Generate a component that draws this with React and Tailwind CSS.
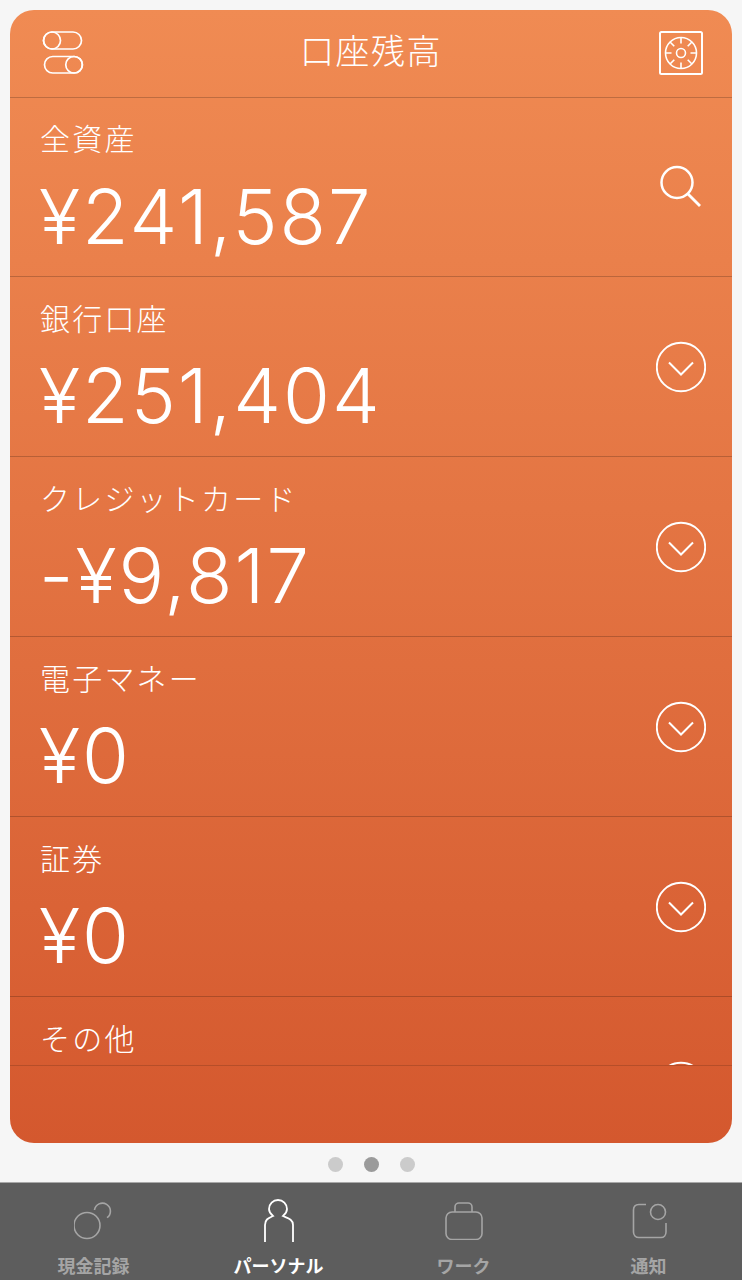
const cjk = "font-['Noto_Sans_CJK_JP',sans-serif]";
const num = "font-['Inter','Noto_Sans_CJK_JP',sans-serif] [font-feature-settings:'calt'_0]";

const rows = [
  { label: "全資産", value: "¥241,587", icon: "search" },
  { label: "銀行口座", value: "¥251,404", icon: "chev" },
  { label: "クレジットカード", value: "-¥9,817", icon: "chev" },
  { label: "電子マネー", value: "¥0", icon: "chev" },
  { label: "証券", value: "¥0", icon: "chev" },
  { label: "その他", value: "¥0", icon: "chev" },
];

function Toggles() {
  return (
    <svg width="42" height="44" viewBox="0 0 42 44" fill="none" stroke="white" strokeWidth="1.7">
      <rect x="1.5" y="1" width="38" height="17" rx="8.5" />
      <circle cx="10" cy="9.5" r="8.5" />
      <rect x="2.5" y="25.5" width="38" height="16.5" rx="8.25" />
      <circle cx="32" cy="33.75" r="8.25" />
    </svg>
  );
}

function Safe() {
  const ticks = [0, 45, 90, 135, 180, 225, 270, 315];
  return (
    <svg width="44" height="44" viewBox="0 0 44 44" fill="none" stroke="white" strokeWidth="1.6">
      <rect x="1" y="1" width="42" height="42" rx="1.5" strokeWidth="2" />
      <circle cx="22" cy="22" r="15.5" />
      <circle cx="22" cy="22" r="4.5" />
      {ticks.map((a) => (
        <line key={a} x1="22" y1="6.5" x2="22" y2="12.5" transform={`rotate(${a} 22 22)`} />
      ))}
    </svg>
  );
}

function Search() {
  return (
    <svg width="44" height="44" viewBox="0 0 44 44" fill="none" stroke="white" strokeWidth="2.5">
      <circle cx="19" cy="18.5" r="15.5" />
      <line x1="30" y1="30" x2="42" y2="42" strokeWidth="2.8" />
    </svg>
  );
}

function Chevron() {
  return (
    <svg width="50" height="52" viewBox="0 0 50 52" fill="none" stroke="white">
      <circle cx="25" cy="26" r="24.2" strokeWidth="1.9" />
      <path d="M13 21.5 L25 33.5 L37 21.5" strokeWidth="2" />
    </svg>
  );
}

function Row({ label, value, icon, first }) {
  return (
    <div className={`${first ? "h-[179px]" : "h-[180px]"} shrink-0 border-b border-black/20 pl-[30px] pr-[26px] flex justify-between text-white`}>
      <div>
        <div className={`${cjk} font-light text-[30px] leading-[40px] ${first ? "mt-[19px]" : "mt-[20px]"} whitespace-nowrap tracking-[2.2px]`}>{label}</div>
        <div className={`${num} font-light text-[76px] leading-[90px] ${first ? "mt-[14px]" : "mt-[13px]"} -ml-[1px] whitespace-nowrap tracking-[2px]`}>{value}</div>
      </div>
      <div className={icon === "search" ? "mt-[66px] mr-[4px]" : "mt-[64px]"}>
        {icon === "search" ? <Search /> : <Chevron />}
      </div>
    </div>
  );
}

function Tab({ label, active, children }) {
  return (
    <div className="flex-1 flex flex-col items-center">
      <div className="h-[52px] mt-[12px] flex items-center justify-center">{children}</div>
      <div className={`${cjk} font-bold text-[18px] leading-[24px] mt-[6px] whitespace-nowrap ${active ? "text-white" : "text-[#a5a5a5]"}`}>{label}</div>
    </div>
  );
}

export default function App() {
  return (
    <div className="w-[742px] h-[1280px] bg-[#f6f6f6] flex flex-col overflow-hidden">
      <div className="mx-[10px] mt-[10px] h-[1133px] shrink-0 rounded-[24px] overflow-hidden bg-gradient-to-b from-[#f08b53] to-[#d4582e] flex flex-col">
        <div className="h-[88px] shrink-0 border-b border-black/20 flex items-center justify-between pl-[32px] pr-[29px] relative">
          <div className="-mt-[1px]"><Toggles /></div>
          <div className={`${cjk} font-light text-[34px] text-white absolute left-0 right-0 text-center leading-[44px] top-[18px] tracking-[1.5px]`}>口座残高</div>
          <div className="-mt-[1px]"><Safe /></div>
        </div>
        <div className="h-[967px] shrink-0 overflow-hidden flex flex-col">
          {rows.map((r, i) => <Row key={r.label} first={i === 0} {...r} />)}
        </div>
        <div className="flex-1 border-t border-black/15" />
      </div>
      <div className="h-[39px] shrink-0 pt-[3px] flex items-center justify-center gap-[21px]">
        <div className="w-[15px] h-[15px] rounded-full bg-[#cbcbcb]" />
        <div className="w-[15px] h-[15px] rounded-full bg-[#9b9b9b]" />
        <div className="w-[15px] h-[15px] rounded-full bg-[#cbcbcb]" />
      </div>
      <div className="h-[98px] shrink-0 bg-[#5d5d5d] border-t border-[#a8a8a8] flex px-[1px]">
        <Tab label="現金記録">
          <svg width="40" height="40" viewBox="0 0 40 40" fill="none" stroke="#a5a5a5" strokeWidth="1.6">
            <circle cx="13" cy="24.5" r="13" />
            <path d="M20.5 9 A8 8 0 1 1 33 16.7" />
          </svg>
        </Tab>
        <Tab label="パーソナル" active>
          <svg width="32" height="44" viewBox="0 0 32 44" fill="none" stroke="white" strokeWidth="1.8">
            <path d="M2 43 V26 C2 20 6 19 10 17 C6.5 14 6 11 6 10 A9 9 0 0 1 24 10 C24 11 23.5 14 20 17 C24 19 30 20 30 26 V43" />
          </svg>
        </Tab>
        <Tab label="ワーク">
          <svg width="38" height="38" viewBox="0 0 38 38" fill="none" stroke="#a5a5a5" strokeWidth="1.6">
            <rect x="1" y="10" width="36" height="27.5" rx="6" />
            <path d="M10 10 V5 C10 2.5 12 1 14 1 H23 C25 1 27 2.5 27 5 V10" />
          </svg>
        </Tab>
        <Tab label="通知">
          <svg width="36" height="36" viewBox="0 0 36 36" fill="none" stroke="#a5a5a5" strokeWidth="1.6">
            <path d="M15 1.5 H8 C4 1.5 2.5 4 2.5 7 V29 C2.5 32 4.5 34.5 8 34.5 H30 C33 34.5 35 32 35 29 V20" />
            <circle cx="27" cy="9" r="7.5" />
          </svg>
        </Tab>
      </div>
    </div>
  );
}
